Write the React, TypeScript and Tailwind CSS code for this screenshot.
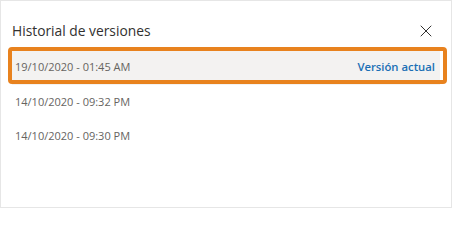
import { X } from "lucide-react"

const versions = [
  { date: "19/10/2020 - 01:45 AM", current: true },
  { date: "14/10/2020 - 09:32 PM", current: false },
  { date: "14/10/2020 - 09:30 PM", current: false },
]

export default function App() {
  return (
    <div
      className="relative w-[452px] h-[208px] bg-white border border-[#e6e6e6] overflow-hidden"
      style={{ fontFamily: "'Open Sans', 'Noto Sans', sans-serif" }}
    >
      {/* Header */}
      <div className="flex items-center justify-between pl-[11px] pr-[15px] pt-[20px] h-[40px]">
        <h2 className="text-[13.8px] leading-[20px] text-[#323130]">Historial de versiones</h2>
        <button className="flex items-center justify-center w-[20px] h-[20px] text-[#323130]">
          <X className="w-[20px] h-[20px]" strokeWidth={1.2} />
        </button>
      </div>

      {/* Version list */}
      <ul className="mt-[9px] px-[11px]">
        {versions.map((v) => (
          <li
            key={v.date}
            className={
              v.current
                ? "flex items-center justify-between h-[34.5px] pl-[3px] pr-[5px] bg-[#f3f2f1]"
                : "flex items-center justify-between h-[34.5px] pl-[3px] pr-[5px]"
            }
          >
            <span className="text-[11px] text-[#66645f]">{v.date}</span>
            {v.current && (
              <span className="text-[11.3px] font-semibold text-[#1a6fb5]">Versión actual</span>
            )}
          </li>
        ))}
      </ul>

      {/* Highlight marker over the current version */}
      <div className="absolute top-[46px] left-[7px] w-[439px] h-[37px] border-4 border-[#e8821e] rounded-[4px] pointer-events-none" />
    </div>
  )
}
